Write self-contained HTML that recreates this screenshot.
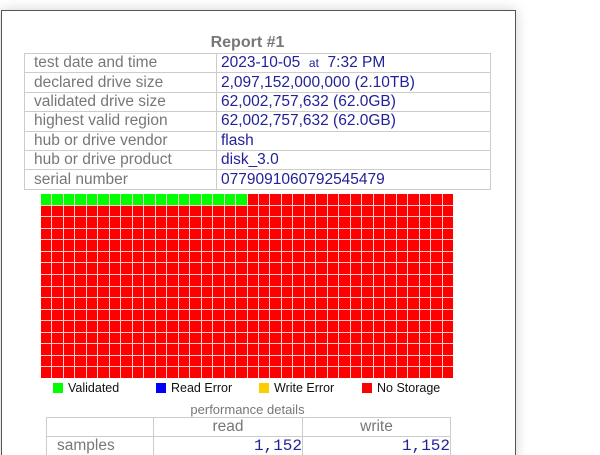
<!DOCTYPE html>
<html><head><style>
html,body{margin:0;padding:0;width:600px;height:455px;overflow:hidden;background:#fff;font-family:"Liberation Sans",Arial,sans-serif;position:relative;}
.win{position:absolute;left:1px;top:10px;width:513px;height:450px;border:1px solid #555;background:#fff;box-shadow:0 0 12px rgba(0,0,0,.18);}
.title{position:absolute;left:0;width:495px;top:34px;text-align:center;font-weight:bold;color:#777;font-size:16px;}
table{border-collapse:collapse;position:absolute;}
.info{left:24px;top:53px;width:467px;}
.info td{border:1px solid #ccc;height:18.4px;padding:0 0 0 9px;font-size:15.5px;line-height:18px;}
.info td:first-child{color:#777;width:182px;}
.info td:last-child{color:#229;padding-left:4px;}
.grid{position:absolute;left:41px;top:194px;width:412px;height:184px;display:grid;grid-template-columns:repeat(36,1fr);grid-template-rows:repeat(16,1fr);gap:1px;background:#fcc;padding:0;}
.grid div{background:#f00;}
.grid div.g{background:#0f0;}
.legend{position:absolute;top:381px;font-size:12.5px;color:#111;}
.legend span{display:inline-block;width:10px;height:10px;vertical-align:-1px;margin-right:5px;}
.pd{position:absolute;left:0;width:495px;top:402px;text-align:center;color:#777;font-size:13px;}
.perf{left:46px;top:417px;width:405px;}
.perf td{border:1px solid #ccc;height:18px;font-size:15.5px;color:#777;padding:0;}
</style></head><body>
<div class="win"></div>
<div class="title">Report #1</div>
<table class="info">
<tr><td>test date and time</td><td>2023-10-05 &nbsp;<span style="font-size:12px">at</span>&nbsp; 7:32 PM</td></tr>
<tr><td>declared drive size</td><td>2,097,152,000,000 (2.10TB)</td></tr>
<tr><td>validated drive size</td><td>62,002,757,632 (62.0GB)</td></tr>
<tr><td>highest valid region</td><td>62,002,757,632 (62.0GB)</td></tr>
<tr><td>hub or drive vendor</td><td>flash</td></tr>
<tr><td>hub or drive product</td><td>disk_3.0</td></tr>
<tr><td>serial number</td><td>0779091060792545479</td></tr>
</table>
<div class="grid" id="g"></div>
<script>
var g=document.getElementById('g'),h='';
for(var i=0;i<576;i++)h+=i<18?'<div class="g"></div>':'<div></div>';
g.innerHTML=h;
</script>
<div class="legend" style="left:53px"><span style="background:#0f0"></span>Validated</div>
<div class="legend" style="left:156px"><span style="background:#00f"></span>Read Error</div>
<div class="legend" style="left:259px"><span style="background:#fc0"></span>Write Error</div>
<div class="legend" style="left:362px"><span style="background:#f00"></span>No Storage</div>
<div class="pd">performance details</div>
<table class="perf">
<tr><td style="width:106px"></td><td style="text-align:center;width:148px">read</td><td style="text-align:center">write</td></tr>
<tr><td style="padding-left:10px">samples</td><td style="text-align:right;color:#229;font-family:'Liberation Mono',monospace;font-size:16px">1,152</td><td style="text-align:right;color:#229;font-family:'Liberation Mono',monospace;font-size:16px">1,152</td></tr>
</table>
</body></html>
